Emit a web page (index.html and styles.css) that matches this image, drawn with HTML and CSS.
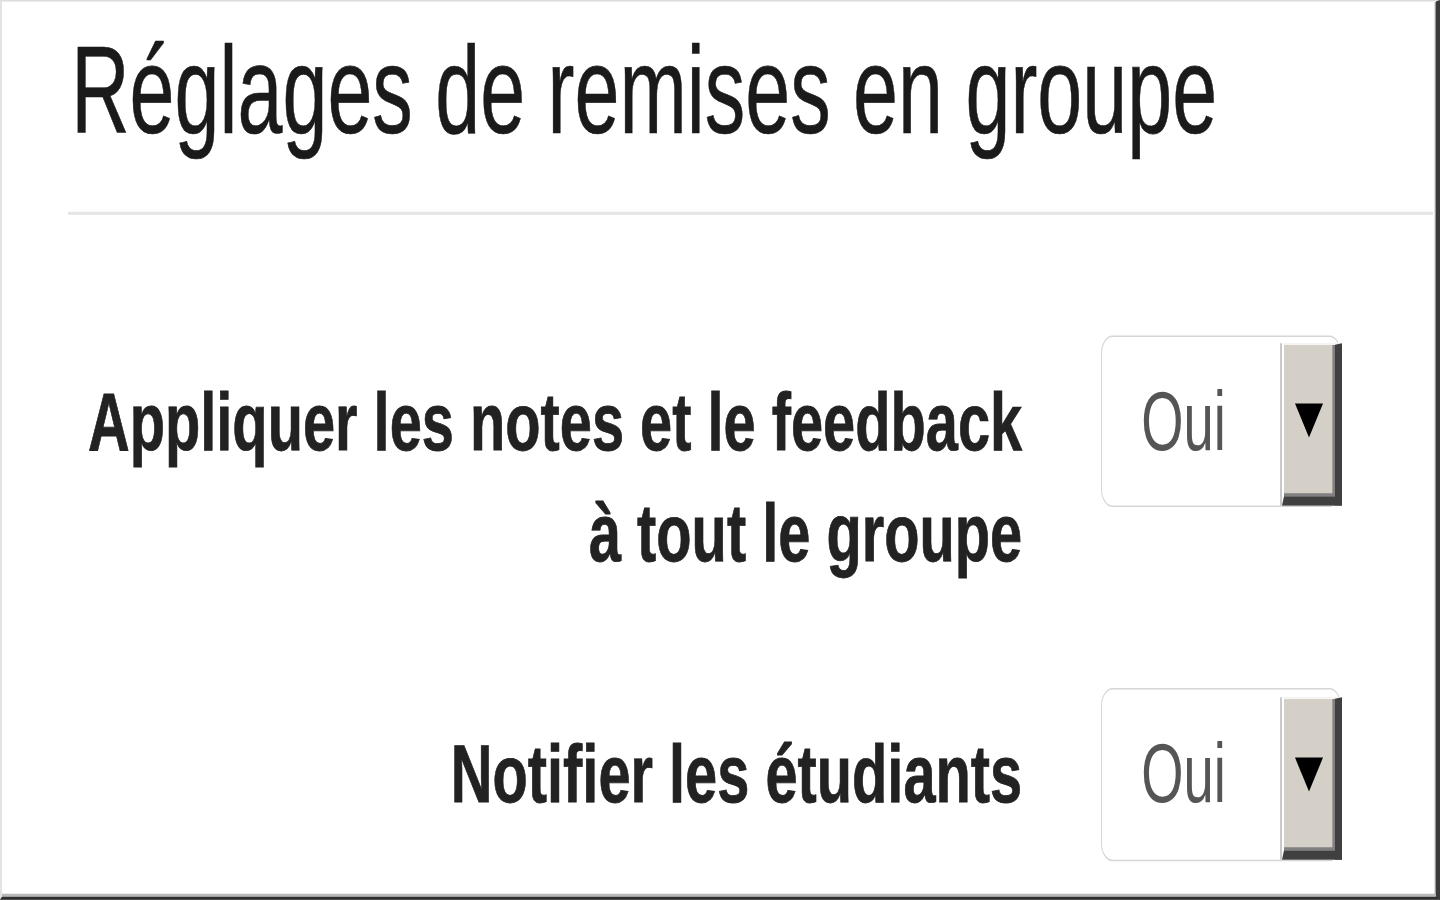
FILE: index.html
```html
<!DOCTYPE html>
<html lang="fr">
<head>
<meta charset="utf-8">
<title>Réglages de remises en groupe</title>
<link rel="stylesheet" href="styles.css">
</head>
<body>
<div class="frame">
  <h2 class="title">Réglages de remises en groupe</h2>
  <hr class="rule">
  <div class="row">
    <label class="label">Appliquer les notes et le feedback<br>à tout le groupe</label>
    <div class="select">
      <span class="value">Oui</span>
      <span class="btn"><span class="arrow"></span></span>
    </div>
  </div>
  <div class="row">
    <label class="label">Notifier les étudiants</label>
    <div class="select">
      <span class="value">Oui</span>
      <span class="btn"><span class="arrow"></span></span>
    </div>
  </div>
</div>
</body>
</html>
```

FILE: styles.css
```css
html, body {
  margin: 0;
  padding: 0;
  background: #ffffff;
  overflow: hidden;
  width: 1440px;
  height: 900px;
}

.frame {
  box-sizing: border-box;
  width: 1440px;
  height: 582.1px;
  transform: scaleY(1.5461);
  transform-origin: 0 0;
  border-left: 2px solid #e2e2e2;
  border-top: 0.7px solid #dcdcdc;
  border-right: 4px solid #3a3a3a;
  border-bottom: 2.6px solid #2e2e2e;
  box-shadow: inset 0 -2px 0 #b8b8b8, inset -1.3px 0 0 #9a9a9a;
  padding: 9.06px 3.23px 0 66px;
  font-family: "Liberation Sans", Arial, sans-serif;
  color: #222;
  overflow: hidden;
}

.title {
  margin: 0 0 0 3.2px;
  font-size: 80.85px;
  font-weight: normal;
  line-height: 97px;
  color: #1a1a1a;
  -webkit-text-stroke: 0.4px #1a1a1a;
}

.rule {
  margin: 29.75px 0 77.6px 0;
  height: 2.59px;
  border: 0;
  background: #e6e6e6;
}

.row {
  display: flex;
  align-items: flex-start;
  margin-bottom: 63.4px;
}

.label {
  display: block;
  width: 860.2px;
  margin-left: 94.4px;
  flex: none;
  padding-top: 20.05px;
  text-align: right;
  font-size: 52.39px;
  font-weight: bold;
  line-height: 72.44px;
  color: #222;
  -webkit-text-stroke: 0.5px #222;
  transform: scaleX(1.103);
  transform-origin: 100% 0;
}

.select {
  box-sizing: border-box;
  margin-left: 78.9px;
  width: 240px;
  height: 111.25px;
  display: flex;
  border: 1.94px solid #d6d6d6;
  border-radius: 11.6px;
  background: #fff;
}

.value {
  flex: 1;
  align-self: center;
  padding-left: 38.8px;
  font-size: 54.33px;
  color: #555;
}

.btn {
  box-sizing: border-box;
  width: 60.15px;
  margin: 4.53px -1.94px 0 0;
  display: flex;
  align-items: center;
  justify-content: center;
  background: #d4d0c8;
  border-left: 2.59px solid #fff;
  border-top: 1.94px solid #fff;
  border-right: 7.1px solid #404040;
  border-bottom: 6.47px solid #404040;
  box-shadow: inset -2.6px -1.94px 0 #808080, -1.94px 0 0 #c8c8c8;
}

.arrow {
  width: 0;
  height: 0;
  margin-right: 1.3px;
  border-left: 14.9px solid transparent;
  border-right: 14.9px solid transparent;
  border-top: 22px solid #000;
}
```
